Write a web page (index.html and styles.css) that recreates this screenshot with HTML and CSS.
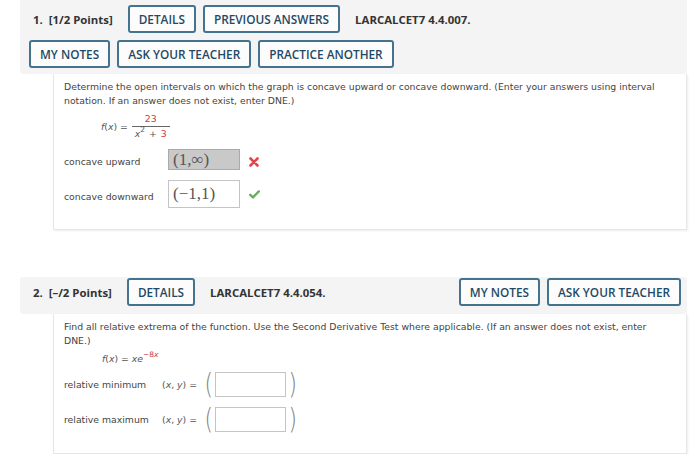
FILE: index.html
```html
<!DOCTYPE html>
<html>
<head>
<meta charset="utf-8">
<link rel="stylesheet" href="styles.css">
</head>
<body>
<div class="page">
  <section class="question q1">
    <div class="qhead">
      <div class="row">
        <span class="qnum">1.&nbsp; [1/2 Points]</span>
        <button class="btn">DETAILS</button>
        <button class="btn">PREVIOUS ANSWERS</button>
        <span class="qcode">LARCALCET7 4.4.007.</span>
      </div>
      <div class="row row2">
        <button class="btn">MY NOTES</button>
        <button class="btn">ASK YOUR TEACHER</button>
        <button class="btn">PRACTICE ANOTHER</button>
      </div>
    </div>
    <div class="qbody">
      <p class="prompt">Determine the open intervals on which the graph is concave upward or concave downward. (Enter your answers using interval notation. If an answer does not exist, enter DNE.)</p>
      <div class="formula f1">
        <span class="fx"><i>f</i>(<i>x</i>) =</span>
        <span class="frac">
          <span class="num red">23</span>
          <span class="den"><i>x</i><sup>2</sup> + <span class="red">3</span></span>
        </span>
      </div>
      <div class="ans-row up">
        <span class="ans-label">concave upward</span>
        <span class="ansbox wrong">(1,∞)</span>
        <svg class="mark" width="10" height="10" viewBox="0 0 10 10"><path d="M1.5 1.5 L8.5 8.5 M8.5 1.5 L1.5 8.5" stroke="#e0474c" stroke-width="2.6" stroke-linecap="round"/></svg>
      </div>
      <div class="ans-row down">
        <span class="ans-label">concave downward</span>
        <span class="ansbox right">(−1,1)</span>
        <svg class="mark" width="11" height="9" viewBox="0 0 11 9"><path d="M1.2 4.8 L4 7.4 L9.8 1.4" fill="none" stroke="#6aab5c" stroke-width="2.4" stroke-linecap="round" stroke-linejoin="round"/></svg>
      </div>
    </div>
  </section>

  <section class="question q2">
    <div class="qhead">
      <div class="row">
        <span class="qnum">2.&nbsp; [–/2 Points]</span>
        <button class="btn">DETAILS</button>
        <span class="qcode">LARCALCET7 4.4.054.</span>
        <button class="btn push">MY NOTES</button>
        <button class="btn">ASK YOUR TEACHER</button>
      </div>
    </div>
    <div class="qbody">
      <p class="prompt">Find all relative extrema of the function. Use the Second Derivative Test where applicable. (If an answer does not exist, enter DNE.)</p>
      <div class="formula f2">
        <span class="fx"><i>f</i>(<i>x</i>) = <i>xe</i><sup class="red">−8<i>x</i></sup></span>
      </div>
      <div class="pt-row">
        <span class="pt-label">relative minimum</span>
        <span class="xy">(<i>x</i>, <i>y</i>) =</span>
        <span class="paren">(</span>
        <span class="ptbox"></span>
        <span class="paren">)</span>
      </div>
      <div class="pt-row">
        <span class="pt-label">relative maximum</span>
        <span class="xy">(<i>x</i>, <i>y</i>) =</span>
        <span class="paren">(</span>
        <span class="ptbox"></span>
        <span class="paren">)</span>
      </div>
    </div>
  </section>
</div>
</body>
</html>
```

FILE: styles.css
```css
html, body {
  margin: 0;
  background: #ffffff;
}

body {
  font-family: "Open Sans", "Liberation Sans", sans-serif;
}

.page {
  margin-left: 20px;
  width: 667px;
}

.qhead {
  background: #f4f4f4;
  border-radius: 0 0 3px 3px;
  padding: 5px 6px 6px 9px;
}

.q2 {
  margin-top: 47px;
}

.q2 .qhead {
  border-radius: 3px;
  padding: 1px 6px 8px 9px;
}

.row {
  display: flex;
  align-items: center;
  gap: 7px;
}

.row2 {
  margin-top: 7px;
}

.qnum,
.qcode {
  font-weight: 700;
  font-size: 11.4px;
  color: #333333;
  white-space: nowrap;
}

.qnum {
  padding-left: 4px;
  margin-right: 8px;
}

.qcode {
  margin-left: 8px;
}

.btn {
  font-family: "Open Sans", "Liberation Sans", sans-serif;
  font-weight: 600;
  font-size: 11.8px;
  color: #1f4964;
  background: #fcfcfc;
  border: 2px solid #44738f;
  border-radius: 3px;
  height: 28px;
  padding: 0 9px;
  box-sizing: border-box;
  white-space: nowrap;
}

.push {
  margin-left: auto;
}

.qbody {
  margin-left: 33px;
  border: 1px solid #e6e6e6;
  border-top: none;
  box-shadow: 1px 1px 2px rgba(0, 0, 0, 0.07);
  padding: 6px 25px 21px 10px;
  font-family: "DejaVu Sans", Verdana, sans-serif;
  font-size: 9.3px;
  line-height: 14px;
  color: #444444;
}

.prompt {
  margin: 0;
}

.red {
  color: #c2423f;
}

.formula {
  display: flex;
  align-items: center;
  color: #555555;
}

.f1 {
  margin: 4px 0 0 37px;
}

.f2 {
  margin: 4px 0 0 38px;
}

.frac {
  display: inline-flex;
  flex-direction: column;
  align-items: center;
  margin-left: 4px;
}

.num {
  align-self: stretch;
  text-align: center;
  border-bottom: 1px solid #666666;
  line-height: 13px;
  padding-bottom: 1px;
}

.den {
  line-height: 14px;
  padding: 0 3px;
  word-spacing: 1px;
}

sup {
  font-size: 7.5px;
  line-height: 0;
  vertical-align: 5px;
}

.ans-row {
  display: flex;
  align-items: center;
}

.ans-row.up {
  margin-top: 8px;
}

.ans-row.down {
  margin-top: 10px;
}

.ans-label {
  width: 104px;
  padding-top: 5px;
}

.ansbox {
  display: flex;
  align-items: center;
  box-sizing: border-box;
  width: 72px;
  padding-left: 4px;
  border: 1px solid #b5b5b5;
  font-family: "Liberation Serif", "DejaVu Serif", serif;
  font-size: 17px;
  color: #555555;
}

.ansbox.wrong {
  height: 21px;
  background: #c9c9c9;
  border-color: #aaaaaa;
}

.ansbox.right {
  height: 28px;
  background: #ffffff;
  border-color: #c4c4c4;
}

.mark {
  margin-left: 9px;
}

.up .mark {
  margin-top: 5px;
}

.pt-row {
  display: flex;
  align-items: center;
  height: 26px;
  margin-top: 5px;
}

.pt-row + .pt-row {
  margin-top: 9px;
}

.pt-label {
  width: 98px;
  padding-top: 2px;
}

.xy {
  width: 41px;
  padding-top: 2px;
  color: #555555;
}

.paren {
  font-family: "DejaVu Sans", sans-serif;
  font-size: 29px;
  line-height: 26px;
  font-weight: 200;
  color: #808080;
  display: inline-block;
  transform: scaleX(0.75);
}

.ptbox {
  box-sizing: border-box;
  width: 71px;
  height: 25px;
  border: 1px solid #c4c4c4;
  background: #ffffff;
  margin: 0 1px;
}
```
